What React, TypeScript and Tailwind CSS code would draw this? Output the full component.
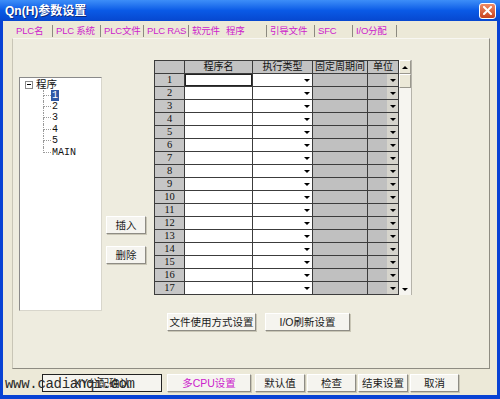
import React from 'react';

const rows = Array.from({ length: 17 }, (_, i) => i + 1);

const tabs = [
  { label: 'PLC名', w: 'w-[39px]', sep: false },
  { label: 'PLC 系统', w: 'w-[48px]', sep: true },
  { label: 'PLC文件', w: 'w-[43px]', sep: true },
  { label: 'PLC RAS', w: 'w-[45px]', sep: true },
  { label: '软元件', w: 'w-[35px]', sep: true },
  { label: '程序', w: 'w-[43px]', sep: false },
  { label: '引导文件', w: 'w-[48px]', sep: true },
  { label: 'SFC', w: 'w-[38px]', sep: true },
  { label: 'I/O分配', w: 'w-[45px]', sep: true },
];

const treeItems = ['1', '2', '3', '4', '5', 'MAIN'];

function Arrow({ up = false }: { up?: boolean }) {
  return up ? (
    <span className="w-0 h-0 border-x-[3px] border-x-transparent border-b-[3px] border-b-black" />
  ) : (
    <span className="w-0 h-0 border-x-[3px] border-x-transparent border-t-[3px] border-t-black" />
  );
}

function Btn({ children, className = '' }: { children: React.ReactNode; className?: string }) {
  return (
    <div
      className={`h-[18px] flex items-center justify-center bg-[#f5f4ef] border border-t-white border-l-white border-r-[#8e8c84] border-b-[#8e8c84] shadow-[1px_1px_0_#c9c6b6] text-[10.5px] leading-none text-[#1a1a1a] ${className}`}
    >
      {children}
    </div>
  );
}

function Tree() {
  return (
    <div className="mt-[38px] ml-[6px] w-[83px] h-[234px] bg-white border border-t-[#8a8a8a] border-l-[#8a8a8a] border-r-[#d8d6cc] border-b-[#d8d6cc] pl-[5px] pt-[1px] text-[10.5px] text-[#111]">
      <div className="flex items-center h-[11px]">
        <span className="w-[8px] h-[8px] border border-[#8a8a8a] bg-white flex items-center justify-center">
          <span className="w-[4px] h-px bg-black" />
        </span>
        <span className="ml-[3px] leading-none">程序</span>
      </div>
      <div className="ml-[18px]">
        {treeItems.map((t, i) => (
          <div key={t} className="flex h-[11.4px]">
            <div className="w-[8px] flex flex-col">
              <div className="h-1/2 border-l border-b border-dotted border-[#9a9a9a]" />
              <div className={`h-1/2 ${i < treeItems.length - 1 ? 'border-l border-dotted border-[#9a9a9a]' : ''}`} />
            </div>
            <div className="flex items-center">
              <span
                className={`px-[1px] h-[11px] flex items-center [font-family:'Liberation_Mono',monospace] text-[10px] leading-none ${
                  i === 0 ? 'bg-[#2f58a6] text-white' : ''
                }`}
              >
                {t}
              </span>
            </div>
          </div>
        ))}
      </div>
    </div>
  );
}

function Grid() {
  const line = 'border-r border-b border-[#3c3c3c]';
  return (
    <div className="mt-[21px] ml-[8px] flex">
      <div className="border-l border-t border-[#3c3c3c] text-[10px] leading-none text-[#111]">
        <div className="flex h-[13px]">
          <div className={`w-[30px] bg-[#c3c3c3] ${line}`} />
          <div className={`w-[68px] bg-[#c3c3c3] ${line} flex items-center justify-center`}>程序名</div>
          <div className={`w-[60px] bg-[#c3c3c3] ${line} flex items-center justify-center`}>执行类型</div>
          <div className={`w-[55px] bg-[#c3c3c3] ${line} flex items-center justify-center`}>固定周期间</div>
          <div className={`w-[31px] bg-[#c3c3c3] ${line} flex items-center justify-center`}>单位</div>
        </div>
        {rows.map((r) => (
          <div key={r} className="flex h-[13px]">
            <div
              className={`w-[30px] bg-[#c6c6c6] ${line} flex items-center justify-center [font-family:'Liberation_Serif',serif] text-[10.5px]`}
            >
              {r}
            </div>
            <div className={`w-[68px] bg-white ${line}`}>
              {r === 1 && <div className="w-full h-full border border-[#222]" />}
            </div>
            <div className={`w-[60px] bg-white ${line} flex justify-end`}>
              <span className="w-[11px] h-full flex items-center justify-center">
                <Arrow />
              </span>
            </div>
            <div className={`w-[55px] bg-[#c0c0c0] ${line}`} />
            <div className={`w-[31px] bg-[#c0c0c0] ${line} flex justify-end`}>
              <span className="w-[11px] h-full bg-[#d6d4cc] flex items-center justify-center">
                <Arrow />
              </span>
            </div>
          </div>
        ))}
      </div>
      <div className="w-[13px] flex flex-col bg-[#f6f5f0] border-r border-[#b5b3aa]">
        <div className="h-[14px] bg-[#ece9d8] border border-t-white border-l-white border-r-[#9a988e] border-b-[#9a988e] flex items-center justify-center">
          <Arrow up />
        </div>
        <div className="h-[14px] bg-[#ece9d8] border border-t-white border-l-white border-r-[#9a988e] border-b-[#9a988e]" />
        <div className="flex-1" />
        <div className="h-[12px] flex items-center justify-center">
          <Arrow />
        </div>
      </div>
    </div>
  );
}

export default function App() {
  return (
    <div className="relative w-[500px] h-[399px] bg-[#0842d4] flex flex-col overflow-hidden [font-family:'Liberation_Sans','Noto_Sans_CJK_SC',sans-serif]">
      {/* Title bar */}
      <div className="h-[21px] flex items-center justify-between pl-[5px] pr-[4px] bg-gradient-to-b from-[#3d8ef8] via-[#0a5ae6] to-[#0747cf]">
        <span className="text-white font-bold text-[12px] leading-none [text-shadow:1px_1px_0_#0a2a80]">
          Qn(H)参数设置
        </span>
        <div className="w-[17px] h-[16px] rounded-[3px] border border-white bg-gradient-to-b from-[#ee8a66] to-[#c8421c] flex items-center justify-center">
          <svg width="9" height="9" viewBox="0 0 9 9">
            <path d="M1 1 L8 8 M8 1 L1 8" stroke="white" strokeWidth="2" strokeLinecap="square" />
          </svg>
        </div>
      </div>

      {/* Body */}
      <div className="flex-1 mx-[3px] mb-[4px] bg-[#ece9d8] flex flex-col">
        {/* Tabs */}
        <div className="h-[17px] ml-[10px] flex items-end pb-[1px] text-[9.5px] tracking-[-0.2px] leading-none text-[#cc22cc]">
          {tabs.map((t, i) => (
            <div
              key={t.label}
              className={`${t.w} h-[12px] pl-[3px] flex items-center whitespace-nowrap overflow-hidden ${
                t.sep ? 'border-l border-[#8c8a80]' : ''
              } ${i === tabs.length - 1 ? 'border-r border-[#8c8a80]' : ''}`}
            >
              {t.label}
            </div>
          ))}
        </div>

        {/* Panel */}
        <div className="ml-[9px] w-[478px] h-[331px] bg-[#eeecdf] border border-t-[#f8f7f2] border-l-[#c8c5b6] border-r-[#8e8c82] border-b-[#8e8c82] flex flex-col">
          <div className="flex items-start">
            <Tree />
            <div className="ml-[4px] mt-[177px] flex flex-col gap-[12px]">
              <Btn className="w-[40px]">插入</Btn>
              <Btn className="w-[40px]">删除</Btn>
            </div>
            <Grid />
          </div>
          <div className="mt-[2px] ml-[154px] flex gap-[9px]">
            <Btn className="w-[89px]">文件使用方式设置</Btn>
            <Btn className="w-[85px]">I/O刷新设置</Btn>
          </div>
        </div>

        {/* Bottom buttons */}
        <div className="mt-[5px] ml-[39px] flex items-center">
          <div className="w-[120px] h-[18px] border border-[#222] bg-[#f5f4ef] flex items-center justify-center text-[10.5px] leading-none text-[#1a1a1a]">
            XY分配确认
          </div>
          <Btn className="w-[84px] ml-[5px] text-[#cc22cc]">多CPU设置</Btn>
          <Btn className="w-[50px] ml-[4px]">默认值</Btn>
          <Btn className="w-[49px] ml-[2px]">检查</Btn>
          <Btn className="w-[50px] ml-[2px]">结束设置</Btn>
          <Btn className="w-[49px] ml-[2px]">取消</Btn>
        </div>
      </div>

      {/* Watermark overlay */}
      <div className="absolute left-[5px] top-[377px] text-[14px] leading-none text-[#2a2a2a] [font-family:'Liberation_Mono',monospace] tracking-[-0.3px]">
        www.cadianqi.com
      </div>
    </div>
  );
}
